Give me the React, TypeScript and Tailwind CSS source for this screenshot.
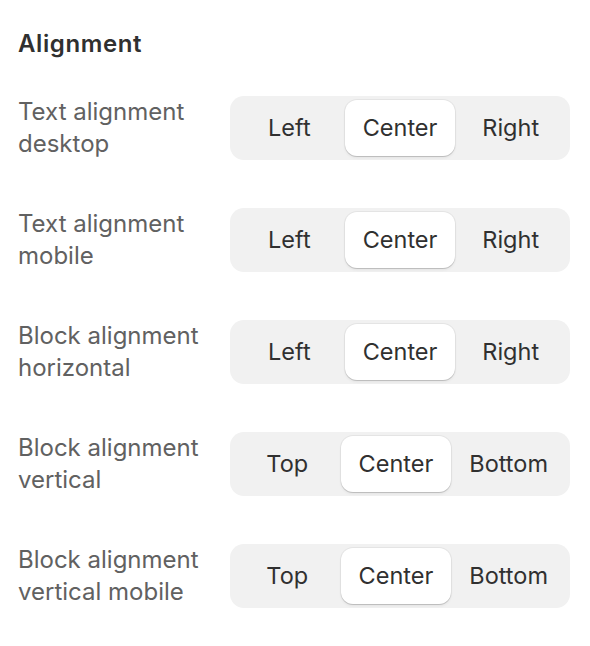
import React, { useState } from 'react';

interface AlignmentSetting {
    label: string;
    options: string[];
    value: string;
}

const initialSettings: AlignmentSetting[] = [
    { label: 'Text alignment desktop', options: ['Left', 'Center', 'Right'], value: 'Center' },
    { label: 'Text alignment mobile', options: ['Left', 'Center', 'Right'], value: 'Center' },
    { label: 'Block alignment horizontal', options: ['Left', 'Center', 'Right'], value: 'Center' },
    { label: 'Block alignment vertical', options: ['Top', 'Center', 'Bottom'], value: 'Center' },
    { label: 'Block alignment vertical mobile', options: ['Top', 'Center', 'Bottom'], value: 'Center' },
];

const SegmentedControl: React.FC<{ options: string[]; value: string; onChange: (v: string) => void }> = ({
    options,
    value,
    onChange,
}) => (
    <div className="flex w-[340px] h-16 shrink-0 rounded-[14px] bg-[#f1f1f1] p-1">
        {options.map(option => (
            <button
                key={option}
                type="button"
                onClick={() => onChange(option)}
                className={`flex-1 px-[18px] rounded-[12px] text-[23.5px] text-[#303030] whitespace-nowrap ${
                    option === value
                        ? 'bg-white shadow-[0_1px_0_0_rgba(0,0,0,0.12),0_0_0_1px_rgba(0,0,0,0.05),0_2px_3px_rgba(0,0,0,0.06)]'
                        : ''
                }`}
            >
                {option}
            </button>
        ))}
    </div>
);

export default function App() {
    const [settings, setSettings] = useState(initialSettings);

    const handleChange = (index: number, value: string) => {
        setSettings(prev => prev.map((s, i) => (i === index ? { ...s, value } : s)));
    };

    return (
        <div className="min-h-screen bg-white pl-[18px] pr-5 pt-7 font-['Inter',sans-serif] antialiased">
            <h2 className="text-[24px] leading-8 font-semibold tracking-[0.025em] text-[#303030]">Alignment</h2>

            <div className="mt-9 flex flex-col gap-12">
                {settings.map((setting, i) => (
                    <div key={setting.label} className="flex items-center">
                        <label className="w-[212px] pr-2 text-[24px] leading-8 text-[#616161]">
                            {setting.label}
                        </label>
                        <SegmentedControl
                            options={setting.options}
                            value={setting.value}
                            onChange={v => handleChange(i, v)}
                        />
                    </div>
                ))}
            </div>
        </div>
    );
}
